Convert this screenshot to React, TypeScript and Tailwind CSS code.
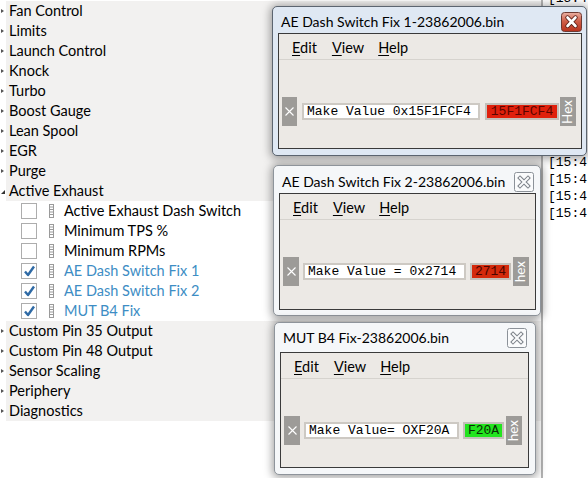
import React from "react";

const UI = { fontFamily: "Lato, 'Noto Sans', sans-serif" };
const MONO = { fontFamily: "'Liberation Mono', 'Courier New', monospace" };

const parentsTop = ["Fan Control", "Limits", "Launch Control", "Knock", "Turbo", "Boost Gauge", "Lean Spool", "EGR", "Purge"];
const children: [string, boolean][] = [
  ["Active Exhaust Dash Switch", false],
  ["Minimum TPS %", false],
  ["Minimum RPMs", false],
  ["AE Dash Switch Fix 1", true],
  ["AE Dash Switch Fix 2", true],
  ["MUT B4 Fix", true],
];
const parentsBottom = ["Custom Pin 35 Output", "Custom Pin 48 Output", "Sensor Scaling", "Periphery", "Diagnostics"];

function Arrow({ open }: { open?: boolean }) {
  return (
    <svg width="6" height="20" viewBox="0 0 6 20" className="shrink-0">
      {open ? <path d="M1 13 L5 9 L5 13 Z" fill="#333" /> : <path d="M1 8 L4 10 L1 12 Z" fill="#555" />}
    </svg>
  );
}

function ParentRow({ label, open }: { label: string; open?: boolean }) {
  return (
    <div className="flex h-[20px] items-stretch">
      <div className="w-[6px] bg-white flex items-center">
        <Arrow open={open} />
      </div>
      <div className="flex-1 bg-[#f2f1f0] flex items-center pl-[3px] text-[14.5px] text-black leading-none">{label}</div>
    </div>
  );
}

function Grip() {
  return (
    <svg width="5" height="14" viewBox="0 0 5 14" className="shrink-0">
      <rect x="0.5" y="0.5" width="4" height="13" fill="#fff" stroke="#9a9a9a" />
      <line x1="1" y1="3" x2="4" y2="3" stroke="#9a9a9a" />
      <line x1="1" y1="5.5" x2="4" y2="5.5" stroke="#9a9a9a" />
      <line x1="1" y1="8" x2="4" y2="8" stroke="#9a9a9a" />
      <line x1="1" y1="10.5" x2="4" y2="10.5" stroke="#9a9a9a" />
    </svg>
  );
}

function ChildRow({ label, checked }: { label: string; checked: boolean }) {
  return (
    <div className="flex h-[20px] items-center bg-white">
      <div className="ml-[21px] w-[16px] h-[16px] border border-[#adadad] bg-white flex items-center justify-center shrink-0">
        {checked && (
          <svg width="13" height="12" viewBox="0 0 13 12">
            <path d="M2 6.5 L5 10 L11 1.5" fill="none" stroke="#2f6aa5" strokeWidth="2.4" strokeLinejoin="round" />
          </svg>
        )}
      </div>
      <div className="ml-[12px]">
        <Grip />
      </div>
      <div className={"ml-[10px] text-[14.5px] leading-none " + (checked ? "text-[#3d8dc4]" : "text-black")}>{label}</div>
    </div>
  );
}

function ActiveClose() {
  return (
    <svg width="21" height="20" viewBox="0 0 21 20" className="shrink-0">
      <defs>
        <linearGradient id="rc" x1="0" y1="0" x2="0" y2="1">
          <stop offset="0" stopColor="#eab2a4" />
          <stop offset="0.45" stopColor="#d0604a" />
          <stop offset="1" stopColor="#b8321c" />
        </linearGradient>
      </defs>
      <rect x="0.5" y="0.5" width="20" height="19" rx="3" fill="url(#rc)" stroke="#6e3a32" />
      <path d="M6.5 5.5 L14.5 14 M14.5 5.5 L6.5 14" stroke="#5a1f17" strokeWidth="4.4" strokeLinecap="round" />
      <path d="M6.5 5.5 L14.5 14 M14.5 5.5 L6.5 14" stroke="#fff" strokeWidth="2.6" strokeLinecap="round" />
    </svg>
  );
}

function InactiveClose() {
  return (
    <svg width="20" height="20" viewBox="0 0 20 20" className="shrink-0">
      <rect x="0.5" y="0.5" width="19" height="19" rx="2" fill="#fafbfc" stroke="#8c9299" />
      <path d="M6 6 L14 14 M14 6 L6 14" stroke="#7b8188" strokeWidth="4" strokeLinecap="square" />
      <path d="M6 6 L14 14 M14 6 L6 14" stroke="#fafbfc" strokeWidth="2" strokeLinecap="square" />
    </svg>
  );
}

function XButton({ w }: { w: string }) {
  return (
    <div className={"h-[29px] bg-[#9d9b98] flex items-center justify-center shrink-0 " + w}>
      <svg width="9" height="9" viewBox="0 0 9 9">
        <path d="M0.5 0.5 L8.5 8.5 M8.5 0.5 L0.5 8.5" stroke="#fff" strokeWidth="1.1" />
      </svg>
    </div>
  );
}

function HexButton({ label, ml }: { label: string; ml: string }) {
  return (
    <div className={"h-[29px] w-[16px] bg-[#9d9b98] flex items-center justify-center shrink-0 " + ml}>
      <span className="[writing-mode:vertical-rl] rotate-180 text-white text-[13.5px] leading-none" style={UI}>
        {label}
      </span>
    </div>
  );
}

type WinProps = {
  pos: string;
  active?: boolean;
  title: string;
  titleH: string;
  titleMt: string;
  closeMt: string;
  closeMr: string;
  client: string;
  xW: string;
  fieldCls: string;
  fieldText: string;
  boxCls: string;
  boxText: string;
  hexLabel: string;
  hexMl: string;
};

function Win(p: WinProps) {
  return (
    <div
      className={
        "absolute flex flex-col border rounded-[5px] shadow-[0_1px_8px_2px_rgba(0,0,0,0.35)] " +
        (p.active ? "bg-[#dfe8f3] border-[#5c6570] " : "bg-[#f5f7f9] border-[#8e949b] ") +
        p.pos
      }
      style={UI}
    >
      <div className={"flex items-start justify-between shrink-0 " + p.titleH}>
        <div className={"pl-[8px] text-[14px] leading-[18px] text-black whitespace-nowrap " + p.titleMt}>{p.title}</div>
        <div className={p.closeMt + " " + p.closeMr}>{p.active ? <ActiveClose /> : <InactiveClose />}</div>
      </div>
      <div className={"flex-1 flex flex-col border border-[#3a3a3a] bg-[#ece9e5] " + p.client}>
        <div className="h-[26px] flex items-center pt-[3px] pl-[13px] text-[14.5px] text-black leading-none border-b border-[#d6d3ce] shrink-0">
          <span>
            <span className="underline underline-offset-2">E</span>dit
          </span>
          <span className="ml-[15px]">
            <span className="underline underline-offset-2">V</span>iew
          </span>
          <span className="ml-[14px]">
            <span className="underline underline-offset-2">H</span>elp
          </span>
        </div>
        <div className="flex-1 pt-[37px]">
          <div className="flex items-center h-[29px] ml-[3px]">
            <XButton w={p.xW} />
            <div className={"h-[17px] bg-white border-2 border-[#cdc9c3] flex items-center pl-[3px] text-[13px] leading-none text-black whitespace-nowrap shrink-0 " + p.fieldCls} style={MONO}>
              {p.fieldText}
            </div>
            <div className={"h-[17px] border-2 border-[#c3bfb9] flex items-center justify-center text-[13px] leading-none whitespace-nowrap shrink-0 " + p.boxCls} style={MONO}>
              {p.boxText}
            </div>
            <HexButton label={p.hexLabel} ml={p.hexMl} />
          </div>
        </div>
      </div>
    </div>
  );
}

export default function App() {
  return (
    <div className="relative w-[588px] h-[478px] overflow-hidden bg-white flex" style={UI}>
      <div className="w-[541px] shrink-0 flex flex-col pt-[1px]">
        {parentsTop.map((l) => (
          <ParentRow key={l} label={l} />
        ))}
        <ParentRow label="Active Exhaust" open />
        {children.map(([l, c]) => (
          <ChildRow key={l} label={l} checked={c} />
        ))}
        {parentsBottom.map((l) => (
          <ParentRow key={l} label={l} />
        ))}
      </div>
      <div className="flex-1 border-l-[2px] border-[#b4b4b4] bg-white pl-[5px] flex flex-col text-[13px] text-black whitespace-nowrap" style={MONO}>
        <div className="-mt-[10px] h-[17px] leading-[17px]">[15:4</div>
        <div className="mt-[147px] h-[17px] leading-[17px]">[15:4</div>
        <div className="h-[17px] leading-[17px]">[15:4</div>
        <div className="h-[17px] leading-[17px]">[15:4</div>
        <div className="h-[17px] leading-[17px]">[15:4</div>
      </div>

      <Win
        pos="left-[272px] top-[6px] w-[315px] h-[150px]"
        active
        title="AE Dash Switch Fix 1-23862006.bin"
        titleH="h-[26px]"
        titleMt="mt-[6px]"
        closeMt="mt-[5px]"
        closeMr="mr-[4px]"
        client="ml-[5px] mr-[4px] mb-[6px]"
        xW="w-[15px]"
        fieldCls="ml-[5px] w-[178px]"
        fieldText="Make Value 0x15F1FCF4"
        boxCls="ml-[5px] w-[74px] bg-[#e0200c] text-[#5a0500]"
        boxText="15F1FCF4"
        hexLabel="Hex"
        hexMl="ml-[1px]"
      />
      <Win
        pos="left-[273px] top-[165px] w-[268px] h-[151px]"
        title="AE Dash Switch Fix 2-23862006.bin"
        titleH="h-[27px]"
        titleMt="mt-[7px]"
        closeMt="mt-[6px]"
        closeMr="mr-[6px]"
        client="ml-[5px] mr-[4px] mb-[5px]"
        xW="w-[16px]"
        fieldCls="ml-[4px] w-[163px]"
        fieldText="Make Value = 0x2714"
        boxCls="ml-[4px] w-[41px] bg-[#d42a0c] text-[#4a0500]"
        boxText="2714"
        hexLabel="hex"
        hexMl="ml-[2px]"
      />
      <Win
        pos="left-[274px] top-[322px] w-[262px] h-[153px]"
        title="MUT B4 Fix-23862006.bin"
        titleH="h-[29px]"
        titleMt="mt-[6px]"
        closeMt="mt-[5px]"
        closeMr="mr-[8px]"
        client="ml-[5px] mr-[6px] mb-[6px]"
        xW="w-[16px]"
        fieldCls="ml-[4px] w-[155px]"
        fieldText="Make Value= OXF20A"
        boxCls="ml-[4px] w-[41px] bg-[#22e41e] text-[#0a2a06]"
        boxText="F20A"
        hexLabel="hex"
        hexMl="ml-[2px]"
      />
    </div>
  );
}
